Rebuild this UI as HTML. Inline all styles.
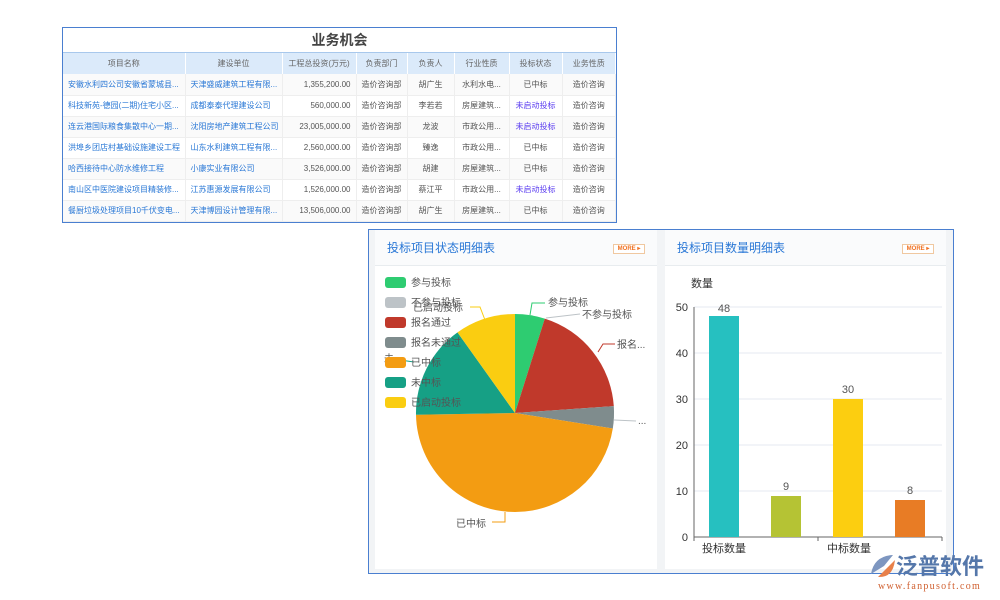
<!DOCTYPE html>
<html><head><meta charset="utf-8"><style>
*{margin:0;padding:0;box-sizing:border-box}
body{width:1000px;height:600px;background:#fff;position:relative;overflow:hidden;font-family:"Liberation Sans","Noto Sans CJK SC",sans-serif}
.tbl{position:absolute;left:62px;top:27px;width:555px;height:196px;border:1px solid #4a7fd0;background:#fff}
.tt{height:25px;text-align:center;font-size:14px;font-weight:bold;color:#444;line-height:25px;border-bottom:1px solid #a8c8ec}
table{border-collapse:collapse;width:100%;font-size:8px;table-layout:fixed}
th{background:#dbeafa;color:#666;font-weight:normal;height:21px;border-right:1px solid #fff}
td{height:21px;border-bottom:1px solid #eee;border-right:1px solid #eee;color:#555;text-align:center;white-space:nowrap;overflow:hidden;padding:0 5px}
td.l{text-align:left;color:#2a78d6}td.r{text-align:right}td.p{color:#5a3cf0}
tr:nth-child(even) td{background:#fafafa}
.wrap{position:absolute;left:368px;top:229px;width:586px;height:345px;border:1px solid #4a7fd0;background:#f2f4f6}
.card{position:absolute;top:0;background:#fff;height:339px}
.hd{height:36px;border-bottom:1px solid #e8ecef;font-size:12px;color:#2a78d6;line-height:36px;padding-left:12px;position:relative;background:#fafbfc}
.more{position:absolute;right:12px;top:14px;width:32px;height:10px;border:1px solid #f0c8a0;font-size:6px;color:#f07020;line-height:8px;text-align:center;font-weight:bold;background:#fff}
</style></head><body>
<div class="tbl"><div class="tt">业务机会</div>
<table><colgroup><col style="width:122px"><col style="width:97px"><col style="width:74px"><col style="width:51px"><col style="width:47px"><col style="width:55px"><col style="width:53px"><col></colgroup>
<tr><th>项目名称</th><th>建设单位</th><th>工程总投资(万元)</th><th>负责部门</th><th>负责人</th><th>行业性质</th><th>投标状态</th><th>业务性质</th></tr>
<tr><td class="l">安徽水利四公司安徽省蒙城县...</td><td class="l">天津盛威建筑工程有限...</td><td class="r">1,355,200.00</td><td>造价咨询部</td><td>胡广生</td><td>水利水电...</td><td>已中标</td><td>造价咨询</td></tr>
<tr><td class="l">科技新苑-德园(二期)住宅小区...</td><td class="l">成都泰泰代理建设公司</td><td class="r">560,000.00</td><td>造价咨询部</td><td>李若若</td><td>房屋建筑...</td><td class="p">未启动投标</td><td>造价咨询</td></tr>
<tr><td class="l">连云港国际粮食集散中心一期...</td><td class="l">沈阳房地产建筑工程公司</td><td class="r">23,005,000.00</td><td>造价咨询部</td><td>龙波</td><td>市政公用...</td><td class="p">未启动投标</td><td>造价咨询</td></tr>
<tr><td class="l">洪埠乡团店村基础设施建设工程</td><td class="l">山东水利建筑工程有限...</td><td class="r">2,560,000.00</td><td>造价咨询部</td><td>臻逸</td><td>市政公用...</td><td>已中标</td><td>造价咨询</td></tr>
<tr><td class="l">哈西接待中心防水维修工程</td><td class="l">小康实业有限公司</td><td class="r">3,526,000.00</td><td>造价咨询部</td><td>胡建</td><td>房屋建筑...</td><td>已中标</td><td>造价咨询</td></tr>
<tr><td class="l">南山区中医院建设项目精装修...</td><td class="l">江苏惠源发展有限公司</td><td class="r">1,526,000.00</td><td>造价咨询部</td><td>蔡江平</td><td>市政公用...</td><td class="p">未启动投标</td><td>造价咨询</td></tr>
<tr><td class="l">餐厨垃圾处理项目10千伏变电...</td><td class="l">天津博园设计管理有限...</td><td class="r">13,506,000.00</td><td>造价咨询部</td><td>胡广生</td><td>房屋建筑...</td><td>已中标</td><td>造价咨询</td></tr>
</table></div>
<div class="wrap">
<div class="card" style="left:6px;width:282px"><div class="hd">投标项目状态明细表<div class="more">MORE ▸</div></div></div>
<div class="card" style="left:296px;width:281px"><div class="hd">投标项目数量明细表<div class="more">MORE ▸</div></div></div>
</div>
<svg style="position:absolute;left:0;top:0" width="1000" height="600" font-family="Liberation Sans,Noto Sans CJK SC,sans-serif">
<g>
<path d="M515 413 L515 314 A99 99 0 0 1 544.8 318.6Z" fill="#2ecc71"/>
<path d="M515 413 L544.8 318.6 A99 99 0 0 1 613.8 406.1Z" fill="#c0392b"/>
<path d="M515 413 L613.8 406.1 A99 99 0 0 1 612.8 428.5Z" fill="#7f8c8d"/>
<path d="M515 413 L612.8 428.5 A99 99 0 0 1 515 512 A99 99 0 0 1 416 414.7Z" fill="#f39c12"/>
<path d="M515 413 L416 414.7 A99 99 0 0 1 457.5 332.4Z" fill="#16a085"/>
<path d="M515 413 L457.5 332.4 A99 99 0 0 1 515 314Z" fill="#facd11"/>
</g>
<g fill="none" stroke-width="1">
<path d="M530 315 L532 303 L545 303" stroke="#2ecc71"/>
<path d="M546 318 L580 314" stroke="#bdc3c7"/>
<path d="M598 352 L603 344 L615 344" stroke="#c0392b"/>
<path d="M614 420 L636 421" stroke="#bdc3c7"/>
<path d="M485 320 L480 307 L470 307" stroke="#facd11"/>
<path d="M505 512 L505 522 L492 522" stroke="#f39c12"/>
<path d="M414 362 L400 360" stroke="#16a085"/>
</g>
<g font-size="10" fill="#555">
<text x="548" y="306">参与投标</text><text x="582" y="318">不参与投标</text><text x="617" y="348">报名...</text><text x="638" y="424">...</text><text x="456" y="527">已中标</text><text x="384" y="362">未</text><text x="413" y="311">已启动投标</text>
</g>
<g font-size="10" fill="#555">
<rect x="385" y="277" width="21" height="11" rx="3" fill="#2ecc71"/><text x="411" y="286">参与投标</text>
<rect x="385" y="297" width="21" height="11" rx="3" fill="#bdc3c7"/><text x="411" y="306">不参与投标</text>
<rect x="385" y="317" width="21" height="11" rx="3" fill="#c0392b"/><text x="411" y="326">报名通过</text>
<rect x="385" y="337" width="21" height="11" rx="3" fill="#7f8c8d"/><text x="411" y="346">报名未通过</text>
<rect x="385" y="357" width="21" height="11" rx="3" fill="#f39c12"/><text x="411" y="366">已中标</text>
<rect x="385" y="377" width="21" height="11" rx="3" fill="#16a085"/><text x="411" y="386">未中标</text>
<rect x="385" y="397" width="21" height="11" rx="3" fill="#facd11"/><text x="411" y="406">已启动投标</text>
</g>
<g stroke="#e6eaf0"><line x1="694" y1="307" x2="942" y2="307"/><line x1="694" y1="353" x2="942" y2="353"/><line x1="694" y1="399" x2="942" y2="399"/><line x1="694" y1="445" x2="942" y2="445"/><line x1="694" y1="491" x2="942" y2="491"/></g>
<path d="M694 307 V537 H942 M694 537 v4 M818 537 v4 M942 537 v4" stroke="#666" fill="none"/>
<g font-size="11" fill="#333" text-anchor="end"><text x="688" y="311">50</text><text x="688" y="357">40</text><text x="688" y="403">30</text><text x="688" y="449">20</text><text x="688" y="495">10</text><text x="688" y="541">0</text></g>
<text x="691" y="287" font-size="11" fill="#333">数量</text>
<rect x="709" y="316" width="30" height="221" fill="#26c0c0"/>
<rect x="771" y="496" width="30" height="41" fill="#b5c334"/>
<rect x="833" y="399" width="30" height="138" fill="#fcce10"/>
<rect x="895" y="500" width="30" height="37" fill="#e87c25"/>
<g font-size="11" fill="#555" text-anchor="middle"><text x="724" y="312">48</text><text x="786" y="490">9</text><text x="848" y="393">30</text><text x="910" y="494">8</text></g>
<g font-size="11" fill="#333"><text x="702" y="552">投标数量</text><text x="827" y="552">中标数量</text></g>
<path d="M871 574 Q874 556 893 555 L884 566 Z" fill="#7d96c0"/>
<path d="M878 577 L895 560 Q893 578 878 577Z" fill="#e8804a"/>
<text x="896" y="574" font-size="22" font-weight="bold" fill="#5577aa">泛普软件</text>
<text x="878" y="589" font-size="10" fill="#d06030" font-family="Liberation Serif,serif" letter-spacing="1.3">www.fanpusoft.com</text>
</svg>
</body></html>
